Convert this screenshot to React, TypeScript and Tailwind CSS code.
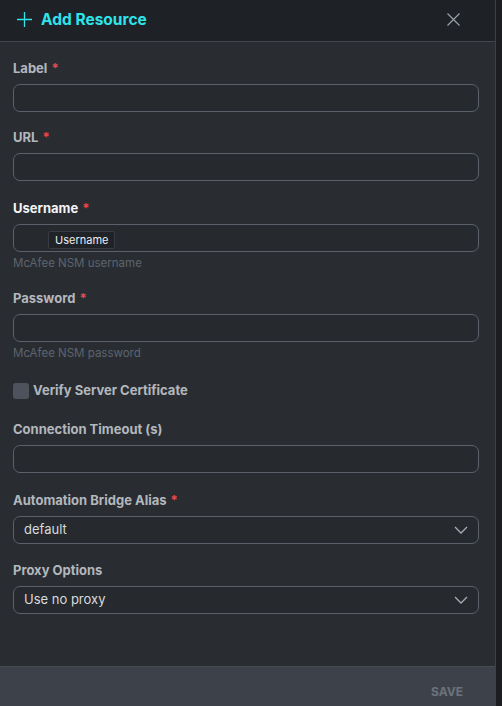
import React from "react";

const Req = () => <span className="ml-1 text-[#e5484d]">*</span>;

const Field = ({
  label,
  required,
  active,
  helper,
  className = "",
  children,
}: {
  label: string;
  required?: boolean;
  active?: boolean;
  helper?: string;
  className?: string;
  children: React.ReactNode;
}) => (
  <div className={`flex flex-col ${className}`}>
    <label
      className={`h-[18px] text-[13px] leading-[18px] font-bold ${
        active ? "text-[#f3f4f5]" : "text-[#b3b7bd]"
      }`}
    >
      {label}
      {required && <Req />}
    </label>
    <div className="mt-[7px]">{children}</div>
    {helper && (
      <div className="mt-1 h-[14px] text-[11.5px] leading-[14px] text-[#5d646e]">{helper}</div>
    )}
  </div>
);

const Input = ({ children }: { children?: React.ReactNode }) => (
  <div className="relative h-[28px] w-full rounded-[7px] border border-[#5b606a] bg-[#262a2f]">
    {children}
  </div>
);

const Select = ({ value }: { value: string }) => (
  <div className="flex h-[28px] w-full items-center justify-between rounded-[7px] border border-[#5b606a] bg-[#262a2f] pl-[10px] pr-[10px]">
    <span className="text-[13px] text-[#d8dadd]">{value}</span>
    <svg width="14" height="8" viewBox="0 0 14 8" fill="none">
      <path d="M1 1l6 6 6-6" stroke="#a9adb3" strokeWidth="1.3" />
    </svg>
  </div>
);

export default function App() {
  return (
    <div
      className="flex h-[706px] w-[502px] bg-[#1b1d21]"
      style={{ fontFamily: "Inter, 'Noto Sans', sans-serif" }}
    >
      <div className="flex w-[496px] flex-col border-r border-[#3d4147] bg-[#292d32]">
        <header className="flex h-[42px] items-center justify-between border-b border-[#41454c] bg-[#1e2126] pb-[2px] pl-[17px] pr-[35px]">
          <div className="flex items-center gap-[9px]">
            <svg width="15" height="15" viewBox="0 0 15 15" fill="none">
              <path d="M7.5 0v15M0 7.5h15" stroke="#2ee4ec" strokeWidth="1.3" />
            </svg>
            <span className="text-[15.5px] font-bold text-[#2ee4ec]">Add Resource</span>
          </div>
          <svg width="13" height="13" viewBox="0 0 13 13" fill="none">
            <path d="M0.5 0.5l12 12M12.5 0.5l-12 12" stroke="#9aa0a7" strokeWidth="1.2" />
          </svg>
        </header>

        <div className="flex flex-1 flex-col pl-[13px] pr-[16px] pt-[17px]">
          <Field label="Label" required>
            <Input />
          </Field>
          <Field label="URL" required className="mt-4">
            <Input />
          </Field>
          <Field label="Username" required active helper="McAfee NSM username" className="mt-[18px]">
            <Input>
              <div className="absolute left-[34px] top-[6px] rounded-[2px] border border-[#383c42] bg-[#1f2227] px-[6px] text-[11px] leading-[16px] text-[#eceef0]">
                Username
              </div>
            </Input>
          </Field>
          <Field label="Password" required helper="McAfee NSM password" className="mt-[19px]">
            <Input />
          </Field>

          <div className="mt-[23px] flex h-[16px] items-center gap-[4px]">
            <div className="h-[16px] w-[16px] rounded-[3px] bg-[#4d525c]" />
            <span className="text-[13px] font-bold text-[#b3b7bd]">Verify Server Certificate</span>
          </div>

          <Field label="Connection Timeout (s)" className="mt-[21px]">
            <Input />
          </Field>
          <Field label="Automation Bridge Alias" required className="mt-[18px]">
            <Select value="default" />
          </Field>
          <Field label="Proxy Options" className="mt-[17px]">
            <Select value="Use no proxy" />
          </Field>
        </div>

        <footer className="flex h-[40px] items-center justify-end border-t border-[#474c54] bg-[#3d424a] pr-[32px] pt-[10px]">
          <span className="text-[12px] font-bold text-[#6c727b]">SAVE</span>
        </footer>
      </div>
    </div>
  );
}
